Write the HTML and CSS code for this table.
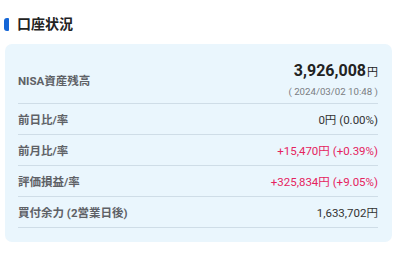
FILE: index.html
```html
<!DOCTYPE html>
<html lang="ja">
<head>
<meta charset="utf-8">
<link rel="stylesheet" href="styles.css">
</head>
<body>
<div class="page">
  <h2 class="title"><span class="bar"></span>口座状況</h2>
  <div class="card">
    <div class="row row-main">
      <div class="label">NISA資産残高</div>
      <div class="value-main">
        <div class="big">3,926,008<span class="yen">円</span></div>
        <div class="date">( 2024/03/02 10:48 )</div>
      </div>
    </div>
    <div class="row">
      <div class="label">前日比/率</div>
      <div class="value">0円 (0.00%)</div>
    </div>
    <div class="row">
      <div class="label">前月比/率</div>
      <div class="value up">+15,470円 (+0.39%)</div>
    </div>
    <div class="row">
      <div class="label">評価損益/率</div>
      <div class="value up">+325,834円 (+9.05%)</div>
    </div>
    <div class="row">
      <div class="label">買付余力 (2営業日後)</div>
      <div class="value">1,633,702円</div>
    </div>
  </div>
</div>
</body>
</html>
```
FILE: styles.css
```css
* { box-sizing: border-box; }
html, body { margin: 0; padding: 0; background: #fff; }
body {
  font-family: Roboto, "Noto Sans CJK JP", sans-serif;
  color: #333;
  width: 400px;
  height: 253px;
  overflow: hidden;
}
.page { padding: 15px 8px 0 5px; }
.title {
  margin: 0 0 11px -1px;
  font-size: 14px;
  font-weight: 700;
  color: #222;
  line-height: 18px;
  display: flex;
  align-items: center;
  gap: 8px;
}
.bar {
  width: 5px;
  height: 13px;
  background: #1466d6;
  border-radius: 3px 1px 1px 3px;
}
.card {
  background: #eaf6fd;
  border-radius: 7px;
  padding: 0 14px 14px 13px;
  width: 387px;
}
.row {
  display: flex;
  justify-content: space-between;
  align-items: center;
  height: 31px;
  border-bottom: 1px solid #cfdde7;
}
.row-main {
  height: auto;
  padding-top: 17px;
  padding-bottom: 4px;
}
.label {
  font-size: 11.5px;
  font-weight: 700;
  color: #5e6166;
}
.value {
  font-size: 11.5px;
  color: #333;
}
.value.up { color: #e5245f; }
.value-main { text-align: right; }
.big {
  font-size: 16px;
  font-weight: 700;
  line-height: 20px;
  color: #222;
}
.yen { font-size: 11px; font-weight: 400; margin-left: 1px; }
.date {
  font-size: 9.7px;
  color: #7a7d82;
  line-height: 14px;
  margin-top: 2px;
}
```
